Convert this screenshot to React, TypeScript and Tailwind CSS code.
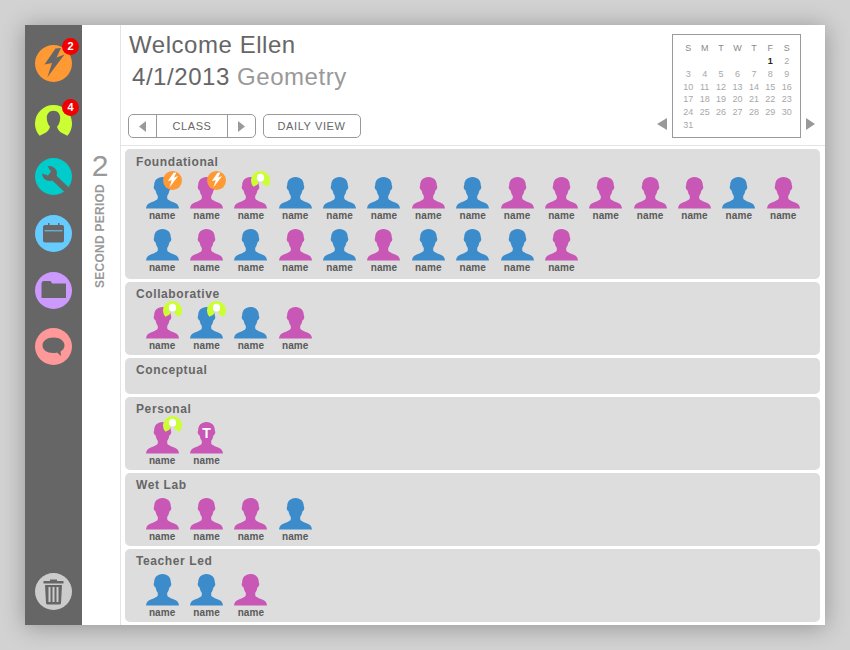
import React from "react";

const PERSON =
  "M16.5 0C11.2 0 8.2 3.6 8.2 8.2C7.9 9 7.6 9.8 7.8 11C8 12.3 8.9 13 9.6 13.4C10.1 15.8 10.9 17.6 11.8 18.8L11.8 21C11.8 23 7.6 24.4 4.2 25.7C1.4 26.8 0.2 28.9 0 31.5L33 31.5C32.8 28.9 31.6 26.8 28.8 25.7C25.4 24.4 21.2 23 21.2 21L21.2 18.8C22.1 17.6 22.9 15.8 23.4 13.4C24.1 13 25 12.3 25.2 11C25.4 9.8 25.1 9 24.8 8.2C24.8 3.6 21.8 0 16.5 0Z";

const BOLT = "M20.5 3.5L9.5 19.5L17 18L12.5 32L29.5 9.5L21.5 12.5L26 3Z";
const RING =
  "M4.6 33.7A18.5 18.5 0 1 1 32.4 33.7L26.5 30.7C24.5 29.5 22.5 27 22 24.7C24 22.5 25.2 19 25.2 15.7C25.2 11.5 22.5 8.7 18.5 8.7C14.5 8.7 11.8 11.5 11.8 15.7C11.8 19 13 22.5 15 24.7C14.5 27 12.5 29.5 10.5 30.7Z";

function Bolt({ color }: { color: string }) {
  return (
    <svg viewBox="0 0 37 37" className="absolute inset-0 h-full w-full">
      <path d={BOLT} fill={color} />
    </svg>
  );
}

function Nav({
  bg,
  badge,
  badgeTop,
  children,
}: {
  bg?: string;
  badge?: string;
  badgeTop?: string;
  children: React.ReactNode;
}) {
  return (
    <div className={`relative h-[37px] w-[37px] rounded-full ${bg ?? ""}`}>
      {children}
      {badge && (
        <span
          className={`absolute left-[27px] flex h-[17px] w-[17px] items-center justify-center rounded-full bg-[#f00000] text-[11px] font-bold text-white ${badgeTop ?? "top-[-7px]"}`}
        >
          {badge}
        </span>
      )}
    </div>
  );
}

type Mark = "bolt" | "ring" | "T" | undefined;

function Person({ c, mark }: { c: "b" | "m"; mark?: Mark }) {
  return (
    <div className="flex w-[44.36px] flex-col items-center">
      <div className="relative h-[32px] w-[33px]">
        <svg viewBox="0 0 33 32" className="h-[32px] w-[33px]">
          <path d={PERSON} fill={c === "b" ? "#3c8ccc" : "#c857b5"} />
        </svg>
        {mark === "bolt" && (
          <span className="absolute left-[17px] top-[-6px] h-[19px] w-[19px] rounded-full bg-[#ff9933]">
            <Bolt color="#ffffff" />
          </span>
        )}
        {mark === "ring" && (
          <svg viewBox="0 3 37 37" className="absolute left-[17px] top-[-6px] h-[19px] w-[19px]">
            <path d={RING} fill="#ccff33" />
            <ellipse cx="18.5" cy="16" rx="7" ry="7.5" fill="#ffffff" />
          </svg>
        )}
        {mark === "T" && (
          <span className="absolute left-0 top-[3px] w-full text-center text-[14px] font-bold leading-[16px] text-white">
            T
          </span>
        )}
      </div>
      <span className="mt-[1px] text-[10px] font-bold leading-[12px] tracking-[0.1px] text-[#5a5a5a]">name</span>
    </div>
  );
}

function Group({
  title,
  items,
  tall,
  short,
}: {
  title: string;
  items: { c: "b" | "m"; mark?: Mark }[];
  tall?: boolean;
  short?: boolean;
}) {
  const size = tall ? "h-[130px] pt-[6px]" : short ? "h-[36px] pt-[5px]" : "h-[73px] pt-[5px]";
  return (
    <section className={`shrink-0 rounded-[5px] bg-[#dddddd] pl-[15px] ${size}`}>
      <h2 className="ml-[-4px] text-[12px] font-bold leading-[14px] tracking-[0.6px] text-[#666666]">{title}</h2>
      {items.length > 0 && (
        <div className={`grid grid-cols-[repeat(15,44.36px)] gap-y-[7px] ${tall ? "mt-[8px]" : "mt-[6px]"}`}>
          {items.map((p, i) => (
            <Person key={i} c={p.c} mark={p.mark} />
          ))}
        </div>
      )}
    </section>
  );
}

const seq = (s: string) => s.split("").map((c) => ({ c: c as "b" | "m" }));

const foundational = seq("bmmbbbmbmmmmmbm" + "bmbmbmbbbm").map((p, i) => ({
  ...p,
  mark: (i < 2 ? "bolt" : i === 2 ? "ring" : undefined) as Mark,
}));

const CAL = [
  ["", "", "", "", "", "1", "2"],
  ["3", "4", "5", "6", "7", "8", "9"],
  ["10", "11", "12", "13", "14", "15", "16"],
  ["17", "18", "19", "20", "21", "22", "23"],
  ["24", "25", "26", "27", "28", "29", "30"],
  ["31", "", "", "", "", "", ""],
];

function TriL({ w = 10, h = 12 }: { w?: number; h?: number }) {
  return (
    <svg width={w} height={h} viewBox="0 0 10 12" preserveAspectRatio="none">
      <path d="M10 0V12L0 6Z" fill="#999999" />
    </svg>
  );
}
function TriR({ w = 9, h = 12 }: { w?: number; h?: number }) {
  return (
    <svg width={w} height={h} viewBox="0 0 10 12" preserveAspectRatio="none">
      <path d="M0 0V12L10 6Z" fill="#999999" />
    </svg>
  );
}

export default function App() {
  return (
    <div className="flex h-[650px] w-[850px] items-center justify-center bg-[#d2d2d2] font-['Liberation_Sans',Arial,sans-serif]">
      <div className="flex h-[600px] w-[800px] bg-white shadow-[0_2px_22px_rgba(0,0,0,0.3)]">
        {/* sidebar */}
        <aside className="flex w-[57px] shrink-0 flex-col items-center gap-[19.7px] bg-[#666666] pb-[15px] pt-[20px]">
          <Nav bg="bg-[#ff9933]" badge="2">
            <Bolt color="#666666" />
          </Nav>
          <Nav badge="4" badgeTop="top-[-3px]">
            <svg viewBox="0 0 37 37" className="absolute inset-0 h-full w-full">
              <path d={RING} fill="#ccff33" />
            </svg>
          </Nav>
          <Nav bg="bg-[#00cccc]">
            <svg viewBox="0 0 37 37" className="absolute inset-0 h-full w-full">
              <circle cx="14.5" cy="15.5" r="7.5" fill="#666666" />
              <path d="M15 16L33 33" stroke="#666666" strokeWidth="6.5" />
              <path d="M11.2 6L4 14.5L13 17.5L16 13.5Z" fill="#00cccc" />
            </svg>
          </Nav>
          <Nav bg="bg-[#66ccff]">
            <svg viewBox="0 0 37 37" className="absolute inset-0 h-full w-full">
              <rect x="8" y="10" width="21" height="17.5" rx="2" fill="#666666" />
              <rect x="9.5" y="15.3" width="18" height="1" fill="#66ccff" />
              <rect x="13" y="8" width="1.5" height="4" fill="#666666" />
              <rect x="23" y="8" width="1.5" height="4" fill="#666666" />
            </svg>
          </Nav>
          <Nav bg="bg-[#cc99ff]">
            <svg viewBox="0 0 37 37" className="absolute inset-0 h-full w-full">
              <path d="M6.5 13C6.5 10 7 9 9 9H15C16 9 16.5 10 17 11.5H31V26H6.5Z" fill="#666666" />
            </svg>
          </Nav>
          <Nav bg="bg-[#ff9999]">
            <svg viewBox="0 0 37 37" className="absolute inset-0 h-full w-full">
              <path
                d="M18.5 9.5C12 9.5 7.5 13 7.5 17.5C7.5 22 12 25 18 25C19.5 25 21 25 22 24.5L26 28L25.5 23.5C28 22 29.5 20 29.5 17.5C29.5 13 25 9.5 18.5 9.5Z"
                fill="#666666"
              />
            </svg>
          </Nav>
          <div className="mt-auto">
            <Nav bg="bg-[#cccccc]">
              <svg viewBox="0 0 37 37" className="absolute inset-0 h-full w-full">
                <path d="M15 6.5H22V8H28.5V10.5H8.5V8H15Z" fill="#666666" />
                <path
                  fillRule="evenodd"
                  d="M10 12H27L26 30C26 31 25 31.5 24 31.5H13C12 31.5 11 31 11 30ZM13.5 14V29H15.5V14ZM17.5 14V29H19.5V14ZM21.5 14V29H23.5V14Z"
                  fill="#666666"
                />
              </svg>
            </Nav>
          </div>
        </aside>

        {/* period */}
        <div className="flex w-[39px] shrink-0 flex-col items-center border-r border-[#e4e4e4] pr-[2px] pt-[123px]">
          <div className="text-[30px] leading-[35px] text-[#999999]">2</div>
          <div className="mt-[1px] rotate-180 text-[12px] font-bold leading-[14px] tracking-[0.25px] text-[#999999] [writing-mode:vertical-rl]">
            SECOND PERIOD
          </div>
        </div>

        {/* main */}
        <div className="flex min-w-0 flex-1 flex-col">
          <header className="flex h-[121px] shrink-0 justify-between border-b border-[#e4e4e4] pl-[7px]">
            <div>
              <div className="pl-[1px] pt-[5px] text-[24px] leading-[29px] tracking-[0.55px] text-[#666666]">Welcome Ellen</div>
              <div className="ml-[4px] mt-[3px] text-[24px] leading-[29px] tracking-[0.55px] text-[#666666]">
                4/1/2013 <span className="text-[#999999]">Geometry</span>
              </div>
              <div className="mt-[23px] flex gap-[7px]">
                <div className="flex h-[24px] w-[128px] items-center rounded-[5px] border border-[#999999] text-[11px] tracking-[0.6px] text-[#666666]">
                  <span className="flex h-full w-[28px] items-center justify-center border-r border-[#999999]">
                    <TriL w={7} h={11} />
                  </span>
                  <span className="flex-1 text-center">CLASS</span>
                  <span className="flex h-full w-[28px] items-center justify-center border-l border-[#999999]">
                    <TriR w={7} h={11} />
                  </span>
                </div>
                <div className="flex h-[24px] w-[98px] items-center justify-center rounded-[5px] border border-[#999999] pr-[1px] text-[11px] tracking-[0.6px] text-[#666666]">
                  DAILY VIEW
                </div>
              </div>
            </div>
            <div className="flex items-end gap-[5px] pb-[7px] pr-[10px]">
              <span className="mb-[8px] flex">
                <TriL />
              </span>
              <div className="h-[104px] w-[129px] border border-[#999999] pl-[7px] pr-[5px] pt-[8px] opacity-[0.99]">
                <div className="grid grid-cols-7 text-center text-[9px] leading-[10px] text-[#888888]">
                  {["S", "M", "T", "W", "T", "F", "S"].map((d, i) => (
                    <span key={i}>{d}</span>
                  ))}
                </div>
                <div className="mt-[2px] grid grid-cols-7 text-center text-[9px] leading-[12.8px] text-[#a8a8a8]">
                  {CAL.flat().map((d, i) => (
                    <span key={i} className={d === "1" ? "font-bold text-[#222222]" : ""}>
                      {d}
                    </span>
                  ))}
                </div>
              </div>
              <span className="mb-[8px] flex">
                <TriR />
              </span>
            </div>
          </header>
          <div className="flex min-h-0 flex-1 flex-col gap-[3px] pl-[4px] pr-[5px] pt-[3px]">
            <Group title="Foundational" items={foundational} tall />
            <Group
              title="Collaborative"
              items={[{ c: "m", mark: "ring" }, { c: "b", mark: "ring" }, { c: "b" }, { c: "m" }]}
            />
            <Group title="Conceptual" items={[]} short />
            <Group title="Personal" items={[{ c: "m", mark: "ring" }, { c: "m", mark: "T" }]} />
            <Group title="Wet Lab" items={seq("mmmb")} />
            <Group title="Teacher Led" items={seq("bbm")} />
          </div>
        </div>
      </div>
    </div>
  );
}
